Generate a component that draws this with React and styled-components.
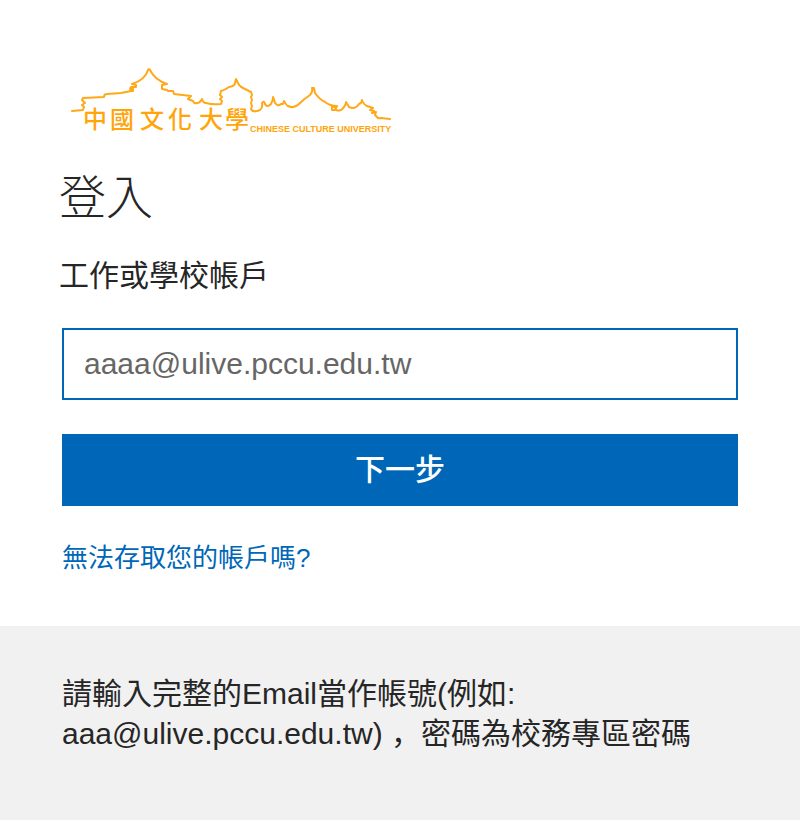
import React from "react";
import styled, { createGlobalStyle } from "styled-components";

const GlobalStyle = createGlobalStyle`
  *, *::before, *::after { box-sizing: border-box; }
  html, body { margin: 0; padding: 0; }
  body {
    background: #f1f1f1;
    color: #262626;
    font-family: "Liberation Sans", "Noto Sans CJK TC", sans-serif;
    font-size: 30px;
    line-height: 40px;
  }
`;

const Page = styled.div`
  display: flex;
  flex-direction: column;
  min-height: 100vh;
`;

const SignInPanel = styled.main`
  padding: 64px 62px 48px;
  background: #ffffff;
`;

const SignInForm = styled.form`
  display: flex;
  flex-direction: column;
  align-items: stretch;
`;

const Logo = styled.svg`
  display: block;
  width: 336px;
  height: 72px;
  fill: none;
  stroke: #ffa818;
  stroke-width: 2;
  stroke-linecap: round;
  stroke-linejoin: round;
`;

const LogoText = styled.text`
  fill: #ffa50a;
  stroke: none;
  font-family: ${(p) => (p.$latin ? '"Liberation Sans", sans-serif' : '"Noto Sans CJK TC", sans-serif')};
  font-size: ${(p) => (p.$latin ? "9px" : "24px")};
  font-weight: ${(p) => (p.$latin ? 700 : 500)};
`;

const Title = styled.h1`
  margin: 26px 0 0 -3px;
  font-size: 47px;
  line-height: 64px;
  font-weight: 300;
  font-family: "Noto Sans CJK TC", sans-serif;
`;

const Label = styled.label`
  margin: 30px 0 0 -3px;
`;

const EmailInput = styled.input`
  width: 100%;
  height: 72px;
  margin-top: 32px;
  padding: 0 20px;
  border: 2px solid #0067b8;
  border-radius: 0;
  outline: none;
  background: #ffffff;
  color: #262626;
  font: inherit;
  &::placeholder { color: #666666; opacity: 1; }
`;

const NextButton = styled.button`
  height: 72px;
  margin-top: 34px;
  border: 0;
  background: #0067b8;
  color: #ffffff;
  font: inherit;
  font-weight: 500;
  cursor: pointer;
`;

const HelpLink = styled.a`
  align-self: flex-start;
  margin-top: 32px;
  color: #0067b8;
  font-size: 26px;
  text-decoration: none;
`;

const Notice = styled.footer`
  padding: 48px 62px;
`;

const NoticeText = styled.p`
  margin: 0;
`;

const CornerComma = styled.span`
  font-family: "Noto Sans CJK SC", sans-serif;
  line-height: 1;
`;

function UniversityLogo() {
  return (
    <Logo viewBox="62 64 336 72" role="img" aria-label="中國文化大學 Chinese Culture University">
      <path d="M72 111 83 110 84 107 82 105 85 103 82 100 83 98 104 97Q104 94 107 94L121 93 131 91 133 91 133 89 130 89 131 87 136 87 136 85 132 84Q145 80 148 70Q149 68 150 70Q155 80 167 84L162 85 162 89 167 90 168 91 173 91 174 94 191 96 188 99 193 101Q194 104 197 103Q200 103 202 99Q203 103 206 103Q213 105 221 104L222 101 220 99 222 97 220 95 221 91Q225 90 229 87Q235 86 235 83L236 79 238 83Q239 86 243 88L251 92 252 95 251 97 252 100 251 103 252 106 251 109Q253 113 260 110Q263 108 262 103Q264 100 265 104Q267 108 271 104Q273 101 273 97Q274 99 275 103Q278 107 281 104L283 104 284 101Q287 106 288 106Q294 109 299 104Q304 99 310 95Q313 92 312 88L314 88 315 93Q319 99 325 102Q330 106 337 106L335 110 332 110 332 107 335 107 336 110Q341 112 344 107Q346 105 346 102Q348 105 349 107Q355 110 359 104L361 103 362 100Q364 105 367 106L373 108 370 110 374 111 372 113 376 112 375 115 377 117Q378 119 381 118L390 119" />
      <LogoText y="128" x="83 110 140 168 199 225">中國文化大學</LogoText>
      <LogoText $latin x="250" y="132">CHINESE CULTURE UNIVERSITY</LogoText>
    </Logo>
  );
}

export default function App() {
  return (
    <Page>
      <GlobalStyle />
      <SignInPanel>
        <SignInForm onSubmit={(event) => event.preventDefault()}>
          <UniversityLogo />
          <Title>登入</Title>
          <Label htmlFor="account">工作或學校帳戶</Label>
          <EmailInput id="account" type="email" placeholder="aaaa@ulive.pccu.edu.tw" />
          <NextButton type="submit">下一步</NextButton>
          <HelpLink href="#recover">無法存取您的帳戶嗎?</HelpLink>
        </SignInForm>
      </SignInPanel>
      <Notice>
        <NoticeText>
          請輸入完整的Email當作帳號(例如:
          <br />
          aaa@ulive.pccu.edu.tw) <CornerComma>，</CornerComma>密碼為校務專區密碼
        </NoticeText>
      </Notice>
    </Page>
  );
}
